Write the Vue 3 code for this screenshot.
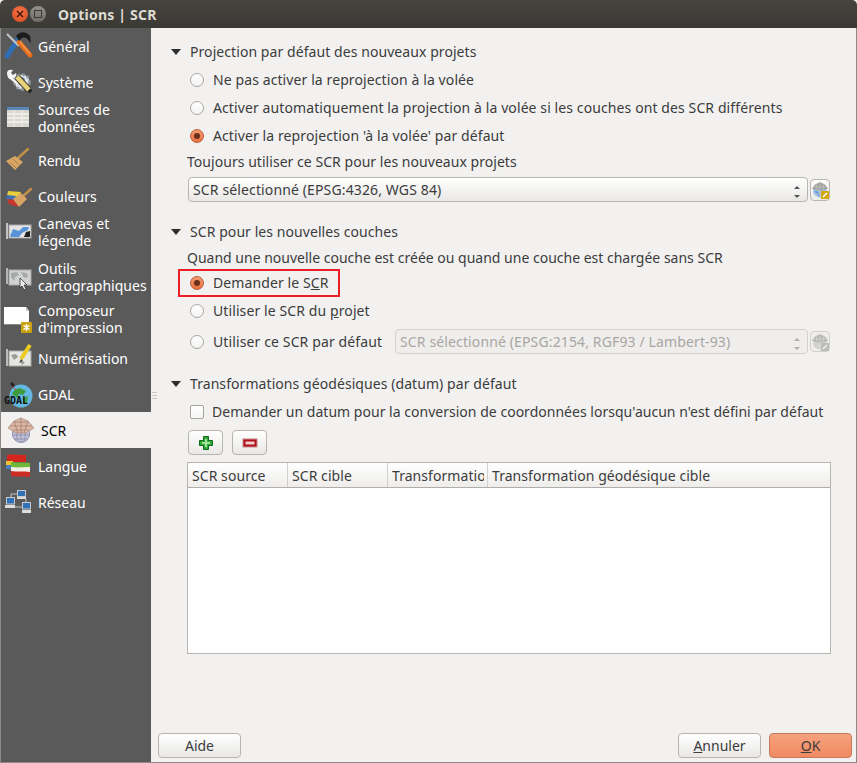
<template>
  <div class="window">
    <div class="titlebar">
      <span class="wbtn wbtn-close">
        <svg width="10" height="10" viewBox="0 0 10 10"><path d="M2 2l6 6M8 2l-6 6" stroke="#4a1608" stroke-width="1.5" /></svg>
      </span>
      <span class="wbtn wbtn-max"><i></i></span>
      <span class="wtitle">Options | SCR</span>
    </div>
    <div class="body">
      <ul class="sidebar">
        <li
          v-for="item in items"
          :key="item.id"
          class="nav-item"
          :class="{ active: item.id === 'scr' }"
          :style="{ height: item.h + 'px', marginTop: (item.mt || 0) + 'px' }"
        >
          <svg class="nav-icon" width="32" height="32" viewBox="0 0 32 32">
            <template v-if="item.id === 'general'">
              <path d="M3 26L15 8" stroke="#2f6fb5" stroke-width="5" stroke-linecap="round" />
              <path d="M3 4l12 12" stroke="#c9c9c9" stroke-width="2" />
              <path d="M15 12l11 13" stroke="#e8701c" stroke-width="5" stroke-linecap="round" />
              <path d="M16 12l10 12" stroke="#f9b27a" stroke-width="1" />
              <path d="M12 6C16 1 22 1 26 6l1 7-3-3C22 7 19 7 17 9l-2 2z" fill="#1d1d1d" />
            </template>
            <template v-else-if="item.id === 'system'">
              <circle cx="18" cy="16" r="7.500" fill="#dde2e7" stroke="#8f98a0" stroke-dasharray="3 2" stroke-width="2.500" />
              <circle cx="17" cy="15" r="4" fill="#5f7f9f" />
              <path d="M3 7c0-3 3-4 6-3L7 7l2 2 3-2c1 3-1 5-3 5l6 5-2 2-7-6C4 13 3 9 3 7z" fill="#f4f4f4" />
              <path d="M13 11l12 13" stroke="#4a4636" stroke-width="6.500" />
              <path d="M13 11l12 13" stroke="#e8d27a" stroke-width="4.500" />
              <path d="M25 24l2 2" stroke="#222" stroke-width="4" />
            </template>
            <template v-else-if="item.id === 'sources'">
              <rect x="3" y="5" width="22" height="20" fill="#d8d8d0" />
              <rect x="3" y="5" width="22" height="3" fill="#5a86b8" />
              <path d="M3 12h22M3 16h22M3 20h22" stroke="#f2f2ec" stroke-width="1.500" />
              <path d="M10 8v17M18 8v17" stroke="#f2f2ec" />
            </template>
            <template v-else-if="item.id === 'rendu'">
              <path d="M13 15L24 5" stroke="#c08f48" stroke-width="2.500" stroke-linecap="round" />
              <path d="M2 17l9-5 8 6-8 8z" fill="#d8a564" />
              <path d="M6 18l6 6M9 15l6 6" stroke="#ab7e42" />
            </template>
            <template v-else-if="item.id === 'couleurs'">
              <path d="M4 11l13 1-3 5-11-1z" fill="#e9cf3c" />
              <path d="M3 15l9 1-2 4-8-1z" fill="#3d6fb5" />
              <path d="M3 19l8 1 3 7-9-3z" fill="#c8352f" />
              <path d="M17 18L27 9" stroke="#c08f48" stroke-width="2.500" stroke-linecap="round" />
              <path d="M9 19l8-6 6 6-8 8z" fill="#d8a564" />
            </template>
            <template v-else-if="item.id === 'canevas'">
              <path d="M3 7v16" stroke="#c4c4c4" stroke-width="2" />
              <rect x="5" y="9" width="22" height="13" fill="#e4e4e4" stroke="#aaa" />
              <path d="M6 20l3-7 6 2 4-4 6 0-1 3-6 3-3 4H7z" fill="#5a94d8" />
              <path d="M20 21l2-5 4-1 0 6z" fill="#222" />
            </template>
            <template v-else-if="item.id === 'outils'">
              <path d="M3 7v16" stroke="#b5b5b5" stroke-width="2" />
              <rect x="5" y="9" width="22" height="15" fill="#cfd2d0" stroke="#aaa" />
              <path d="M7 12l6-1 2 3-4 2-1 4-3-4zM17 11l6 1 1 4-4 1z" fill="#a7aaa8" />
              <path d="M16 17v10l2-2 2 4 2-1-2-4h3z" fill="#eee" stroke="#333" stroke-width=".8" />
            </template>
            <template v-else-if="item.id === 'composeur'">
              <path d="M0 4h22l3 4v13H0z" fill="#fff" />
              <path d="M22 4v4h3z" fill="#c9c9c9" />
              <path d="M0 21.500h25" stroke="#888" stroke-width="1" />
              <rect x="17" y="19" width="11" height="11" rx="1" fill="#c9a20f" />
              <path d="M22.500 21v7M19.500 22.500l6 4M25.500 22.500l-6 4" stroke="#fff" stroke-width="1.500" />
            </template>
            <template v-else-if="item.id === 'numerisation'">
              <path d="M3 7v17" stroke="#bbb" stroke-width="2" />
              <rect x="5" y="9" width="22" height="15" fill="#e4e6e2" stroke="#aaa" />
              <path d="M7 13l5-1 2 3-4 3zM16 19l5 1-3 3z" fill="#9a9c98" />
              <path d="M26 3L17 17" stroke="#eccb1e" stroke-width="4" />
              <path d="M17 17l-2 4 4-2z" fill="#444" />
            </template>
            <template v-else-if="item.id === 'gdal'">
              <circle cx="17" cy="18" r="11.500" fill="#63b7e0" />
              <path d="M8 16c2-5 7-7 10-5l4 2-3 4-4-1-2 4zM19 20l5-2-1 6-3 2z" fill="#3f9c3a" />
              <path d="M7 5l3 3" stroke="#222" stroke-width="2.500" />
              <path d="M9 9l3 3" stroke="#b33" stroke-width="1" />
              <text x="0" y="26" class="gdal-text">GDAL</text>
            </template>
            <template v-else-if="item.id === 'scr'">
              <circle cx="14" cy="20" r="8.500" fill="#c4c4dc" stroke="#8a8aa8" />
              <path d="M6 21h16M14 16v12M8 25h12M10 19c-1 3 0 7 2 9M18 19c1 3 0 7-2 9" stroke="#8a8aa8" stroke-width=".8" fill="none" />
              <path d="M14 4l7 3 6 7-8 5H9l-8-5 6-7z" fill="#dcb8a8" stroke="#a88878" stroke-width=".7" />
              <path d="M7 7l4 12M21 7l-4 12M14 4v15M3 12h22M7 8h14M6 16h16" stroke="#a07868" stroke-width=".7" />
            </template>
            <template v-else-if="item.id === 'langue'">
              <path d="M3 5c6-1 13 0 19 0v7H3z" fill="#d2261e" />
              <path d="M2 11h7v4H2z" fill="#e6c62c" />
              <path d="M2 15h6v4H2z" fill="#4a7fc0" />
              <path d="M7 12c6 1 13 0 19 1v5H7z" fill="#6fb83a" />
              <path d="M7 17c6 1 13 0 19 0v5H7z" fill="#f0f0e8" />
              <path d="M7 21c6 1 13 0 19 1v5c-6-1-13 0-19-1z" fill="#cc2b24" />
            </template>
            <template v-else-if="item.id === 'reseau'">
              <path d="M7 11V8h6M22 13v3" stroke="#c4c4c4" stroke-width="1" fill="none" />
              <path d="M11 21h7" stroke="#c4c4c4" stroke-width="1" />
              <rect x="13.500" y="4.500" width="8" height="6" fill="#2f72b8" stroke="#c9c9c9" />
              <rect x="13" y="11" width="9" height="2" fill="#ddd" />
              <rect x="2.500" y="11.500" width="8" height="6.500" fill="#2f72b8" stroke="#c9c9c9" />
              <rect x="1" y="19" width="10" height="3" fill="#ddd" />
              <rect x="18.500" y="16.500" width="8" height="6.500" fill="#2f72b8" stroke="#c9c9c9" />
              <rect x="18" y="24" width="9" height="3" fill="#ddd" />
            </template>
          </svg>
          <span class="nav-label">{{ item.label }}</span>
        </li>
      </ul>

      <div class="main">
        <span class="splitter"></span>

        <div class="section-head"><i class="caret"></i>Projection par défaut des nouveaux projets</div>
        <div class="radio-row r1"><i class="radio"></i>Ne pas activer la reprojection à la volée</div>
        <div class="radio-row r2"><i class="radio"></i>Activer automatiquement la projection à la volée si les couches ont des SCR différents</div>
        <div class="radio-row r2"><i class="radio checked"></i>Activer la reprojection 'à la volée' par défaut</div>
        <div class="plain p1">Toujours utiliser ce SCR pour les nouveaux projets</div>
        <div class="combo-row c1">
          <div class="combo">
            <span>SCR sélectionné (EPSG:4326, WGS 84)</span>
            <i class="spin"></i>
          </div>
          <button class="globe-btn">
            <svg width="18" height="18" viewBox="0 0 18 18">
              <circle cx="9" cy="9.500" r="7" fill="#a6c6ea" />
              <path d="M3 10c2 3 4 5 6 6 0-3-1-5-3-6z" fill="#6f9fd8" />
              <path d="M9 1l5 2.500 3 4-5 2H6L1 7.500l3-4z" fill="#a2a2a0" />
              <path d="M2 13h14M9 10v7M5 3l1.500 6.500M13 3l-1.500 6.500M9 1v8M3 6h12" stroke="#c8c8c6" fill="none" stroke-width=".7" />
              <rect x="10" y="10" width="8" height="8" fill="#d4a80e" />
              <path d="M12 16l4-4" stroke="#fff" stroke-width="1.500" />
            </svg>
          </button>
        </div>

        <div class="section-head s2"><i class="caret"></i>SCR pour les nouvelles couches</div>
        <div class="plain p2">Quand une nouvelle couche est créée ou quand une couche est chargée sans SCR</div>
        <div class="radio-row highlight"><i class="radio checked"></i><span>Demander le S<u>C</u>R</span></div>
        <div class="radio-row r3"><i class="radio"></i><span>Utiliser le SCR du <u>p</u>rojet</span></div>
        <div class="radio-row r4">
          <i class="radio"></i><span class="r4-label">Utiliser ce SCR par défaut</span>
          <div class="combo disabled">
            <span>SCR sélectionné (EPSG:2154, RGF93 / Lambert-93)</span>
            <i class="spin"></i>
          </div>
          <button class="globe-btn off">
            <svg width="18" height="18" viewBox="0 0 18 18">
              <circle cx="9" cy="9.500" r="7" fill="#d2d2d0" />
              <path d="M9 1l5 2.500 3 4-5 2H6L1 7.500l3-4z" fill="#b6b6b4" />
              <path d="M2 13h14M9 10v7M5 3l1.500 6.500M13 3l-1.500 6.500M9 1v8M3 6h12" stroke="#d8d8d6" fill="none" stroke-width=".7" />
              <rect x="10" y="10" width="8" height="8" fill="#bcbcba" />
              <path d="M12 16l4-4" stroke="#eee" stroke-width="1.500" />
            </svg>
          </button>
        </div>

        <div class="section-head s3"><i class="caret"></i>Transformations géodésiques (datum) par défaut</div>
        <div class="check-row"><i class="check"></i>Demander un datum pour la conversion de coordonnées lorsqu'aucun n'est défini par défaut</div>
        <div class="tool-row">
          <button class="tool-btn">
            <svg width="16" height="16" viewBox="0 0 16 16">
              <path d="M5.500 1.500h5v4h4v5h-4v4h-5v-4h-4v-5h4z" fill="#2fa838" stroke="#0f6a1c" />
              <path d="M7 4h2v3h3v2H9v3H7V9H4V7h3z" fill="#9fe39a" />
            </svg>
          </button>
          <button class="tool-btn">
            <svg width="16" height="12" viewBox="0 0 16 12">
              <rect x="1" y="2" width="14" height="8" fill="#b0101a" stroke="#c98a8a" />
              <rect x="3.500" y="4.500" width="9" height="3" fill="#f0d0d0" />
            </svg>
          </button>
        </div>

        <div class="table">
          <div class="thead">
            <div v-for="col in columns" :key="col.label" class="th" :class="{ last: !col.w }" :style="{ width: col.w ? col.w + 'px' : 'auto' }">
              <span class="th-text">{{ col.label }}</span>
            </div>
          </div>
        </div>

        <div class="footer">
          <button class="btn">Aide</button>
          <div class="footer-right">
            <button class="btn"><u>A</u>nnuler</button>
            <button class="btn primary"><u>O</u>K</button>
          </div>
        </div>
      </div>
    </div>
  </div>
</template>

<script setup>
const items = [
  { id: 'general', label: 'Général', h: 36 },
  { id: 'system', label: 'Système', h: 36 },
  { id: 'sources', label: 'Sources de données', h: 35 },
  { id: 'rendu', label: 'Rendu', h: 36, mt: 7 },
  { id: 'couleurs', label: 'Couleurs', h: 36 },
  { id: 'canevas', label: 'Canevas et légende', h: 35 },
  { id: 'outils', label: 'Outils cartographiques', h: 35, mt: 10 },
  { id: 'composeur', label: "Composeur d'impression", h: 35, mt: 7 },
  { id: 'numerisation', label: 'Numérisation', h: 36, mt: 4 },
  { id: 'gdal', label: 'GDAL', h: 36 },
  { id: 'scr', label: 'SCR', h: 36 },
  { id: 'langue', label: 'Langue', h: 36 },
  { id: 'reseau', label: 'Réseau', h: 36 }
]

const columns = [
  { label: 'SCR source', w: 100 },
  { label: 'SCR cible', w: 100 },
  { label: 'Transformatio', w: 100 },
  { label: 'Transformation géodésique cible' }
]
</script>

<style>
html, body {
  margin: 0;
  background: #fff;
}
</style>

<style scoped>
.window {
  width: 857px;
  height: 763px;
  display: flex;
  flex-direction: column;
  box-sizing: border-box;
  font-family: "Noto Sans", "Open Sans", sans-serif;
  font-size: 14px;
  color: #3c3c3c;
  overflow: hidden;
  background: #f2f1f0;
}

.titlebar {
  height: 28px;
  flex: none;
  display: flex;
  align-items: center;
  background: linear-gradient(#45443f, #3a3935);
  border-radius: 5px 5px 0 0;
  padding-left: 12px;
  box-sizing: border-box;
}

.wbtn {
  width: 16px;
  height: 16px;
  border-radius: 50%;
  display: flex;
  align-items: center;
  justify-content: center;
}

.wbtn-close {
  background: radial-gradient(circle at 50% 35%, #f3764a, #d8481c);
}

.wbtn-max {
  margin-left: 2px;
  background: linear-gradient(#918f89, #6f6d67);
}

.wbtn-max i {
  width: 6px;
  height: 6px;
  border: 1px solid #3a3935;
}

.wtitle {
  margin-left: 12px;
  font-weight: 700;
  font-size: 14px;
  color: #dfdbd2;
  letter-spacing: 0.2px;
}

.body {
  flex: 1;
  display: flex;
  min-height: 0;
  border-left: 1px solid #8a8a86;
  border-right: 1px solid #8a8a86;
  border-bottom: 1px solid #8a8a86;
}

.sidebar {
  width: 150px;
  flex: none;
  margin: 0;
  padding: 0;
  list-style: none;
  background: #5a5a5a;
  color: #fff;
}

.nav-item {
  display: flex;
  align-items: center;
  line-height: 17px;
  padding-left: 3px;
}

.nav-item.active {
  background: #f2f1f0;
  color: #000;
  padding-left: 6px;
}

.nav-icon {
  flex: none;
}

.nav-label {
  margin-left: 2px;
  width: 112px;
}

.gdal-text {
  font-family: "DejaVu Sans Mono", monospace;
  font-size: 10px;
  font-weight: 700;
  fill: #111;
}

.main {
  flex: 1;
  min-width: 0;
  position: relative;
  display: flex;
  flex-direction: column;
  padding: 15px 25px 4px 36px;
}

.splitter {
  position: absolute;
  left: 1px;
  top: 364px;
  width: 5px;
  height: 7px;
  background: repeating-linear-gradient(#c9c8c5 0 1px, transparent 1px 3px);
}

.section-head {
  height: 18px;
  line-height: 18px;
  display: flex;
  align-items: center;
  margin-left: 3px;
  letter-spacing: 0.07px;
}

.caret {
  width: 0;
  height: 0;
  border-left: 5.5px solid transparent;
  border-right: 5.5px solid transparent;
  border-top: 6px solid #2e2e2e;
  margin: 0 9px 0 -19px;
}

.s2 {
  margin-top: 21px;
}

.s3 {
  margin-top: 21px;
}

.radio-row {
  display: flex;
  align-items: center;
  height: 18px;
  line-height: 18px;
  white-space: nowrap;
  margin-left: 3px;
  letter-spacing: 0.1px;
}

.r1 {
  margin-top: 10px;
}

.r2 {
  margin-top: 10px;
}

.r3 {
  margin-top: 5px;
}

.r4 {
  height: 25px;
  margin-top: 9px;
}

.radio {
  width: 12px;
  height: 12px;
  flex: none;
  margin-right: 9px;
  border: 1px solid #a8a6a0;
  border-radius: 50%;
  background: linear-gradient(#fff, #f3f3f3);
  position: relative;
}

.radio.checked {
  background: linear-gradient(#f59a72, #e8703e);
  border-color: #b9603c;
}

.radio.checked::after {
  content: '';
  position: absolute;
  left: 3px;
  top: 3px;
  width: 6px;
  height: 6px;
  border-radius: 50%;
  background: #6a2f1a;
}

.plain {
  height: 18px;
  line-height: 18px;
  white-space: nowrap;
}

.p1 {
  margin-top: 8px;
  letter-spacing: 0.04px;
}

.p2 {
  margin-top: 8px;
}

.combo-row {
  display: flex;
  align-items: center;
  margin-top: 6px;
  margin-left: 1px;
}

.combo {
  flex: 1;
  height: 25px;
  box-sizing: border-box;
  display: flex;
  align-items: center;
  padding-left: 4px;
  border: 1px solid #b8b4ae;
  border-radius: 4px;
  background: linear-gradient(#fff, #e9e8e6);
  position: relative;
  white-space: nowrap;
  letter-spacing: 0.13px;
}

.combo.disabled {
  background: #efeeec;
  color: #a8a6a2;
  border-color: #d2d0cc;
}

.spin {
  position: absolute;
  right: 6px;
  top: 8px;
  width: 7px;
  height: 0;
}

.spin::before,
.spin::after {
  content: '';
  position: absolute;
  left: 0;
  border-left: 3.5px solid transparent;
  border-right: 3.5px solid transparent;
}

.spin::before {
  top: 0;
  border-bottom: 3.5px solid #555;
}

.spin::after {
  top: 8.5px;
  border-top: 3.5px solid #555;
}

.combo.disabled .spin {
  opacity: 0.4;
}

.globe-btn {
  width: 20px;
  height: 22px;
  flex: none;
  margin: 0 1px 0 2px;
  padding: 0;
  display: flex;
  align-items: center;
  justify-content: center;
  border: 1px solid #b8b4ae;
  border-radius: 4px;
  background: linear-gradient(#fff, #eeece9);
}

.globe-btn.off {
  height: 21px;
  border-color: #d2d0cc;
  background: #efeeec;
}

.r4-label {
  width: 182px;
  flex: none;
  letter-spacing: 0.12px;
}

.highlight {
  width: 148px;
  height: 24px;
  margin: 2px 0 0 -9px;
  padding-left: 10px;
  border: 2px solid #ee1c25;
  box-sizing: content-box;
}

.check-row {
  height: 18px;
  line-height: 18px;
  display: flex;
  align-items: center;
  margin-top: 10px;
  margin-left: 3px;
  white-space: nowrap;
  letter-spacing: 0.02px;
}

.check {
  width: 12px;
  height: 12px;
  flex: none;
  margin-right: 8px;
  border: 1px solid #a8a6a0;
  border-radius: 2px;
  background: linear-gradient(#fff, #f5f5f5);
}

.tool-row {
  display: flex;
  gap: 9px;
  margin-top: 9px;
  margin-left: 1px;
}

.tool-btn {
  width: 35px;
  height: 25px;
  padding: 0;
  display: flex;
  align-items: center;
  justify-content: center;
  border: 1px solid #b8b4ae;
  border-radius: 4px;
  background: linear-gradient(#fff, #e9e8e6);
}

.table {
  height: 190px;
  margin-top: 7px;
  border: 1px solid #b8b5b0;
  background: #fff;
  box-sizing: content-box;
}

.thead {
  display: flex;
  height: 24px;
  border-bottom: 1px solid #b0aeaa;
  background: linear-gradient(#fff, #eeedeb);
}

.th {
  flex: none;
  box-sizing: border-box;
  padding-left: 4px;
  line-height: 26px;
  white-space: nowrap;
  overflow: hidden;
  border-right: 1px solid #d2d0cc;
  letter-spacing: 0.06px;
}

.th-text {
  display: block;
  max-width: 92px;
  overflow: hidden;
}

.th.last {
  flex: 1;
  border-right: 0;
}

.th.last .th-text {
  max-width: none;
}

.footer {
  display: flex;
  justify-content: space-between;
  margin-top: auto;
  margin-left: -29px;
  margin-right: -21px;
}

.footer-right {
  display: flex;
  gap: 8px;
}

.btn {
  width: 83px;
  height: 25px;
  padding: 0;
  font: inherit;
  color: #3c3c3c;
  border: 1px solid #b8b4ae;
  border-radius: 4px;
  background: linear-gradient(#fff, #e9e8e6);
}

.btn.primary {
  background: linear-gradient(#f6a27e, #f08a62);
  border-color: #c47a5a;
}
</style>
